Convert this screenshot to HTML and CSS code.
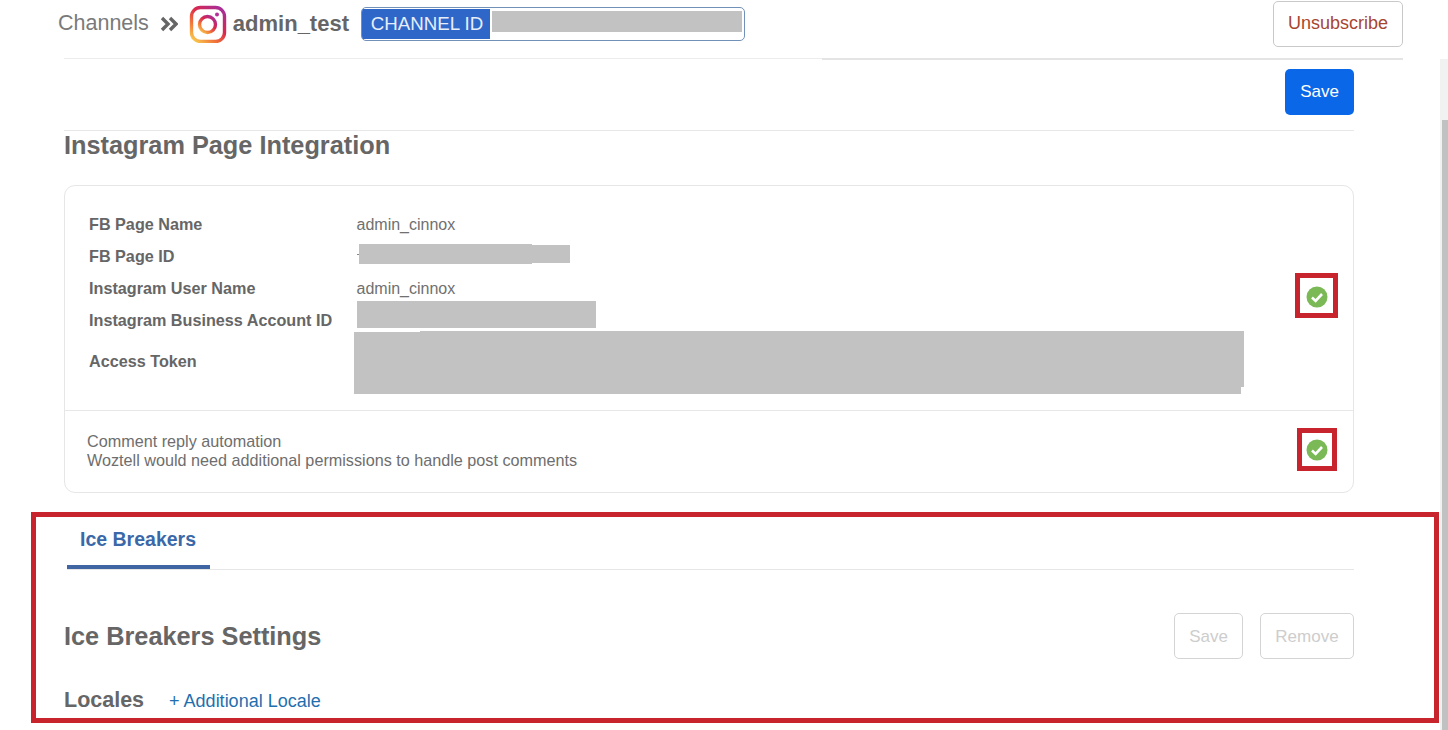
FILE: index.html
```html
<!DOCTYPE html>
<html lang="en">
<head>
<meta charset="utf-8">
<title>Instagram Page Integration</title>
<link rel="stylesheet" href="styles.css">
</head>
<body>
<header class="header">
  <span class="crumb">Channels</span>
  <svg class="chevrons" width="18" height="16" viewBox="0 0 18 16" fill="none" stroke="#666" stroke-width="3.4"><path d="M2 2l6 6-6 6M10 2l6 6-6 6"/></svg>
  <svg class="ig" width="38" height="38" viewBox="0 0 38 38" fill="none">
    <defs><linearGradient id="g" x1="0.1" y1="1" x2="0.9" y2="0"><stop offset="0" stop-color="#f9c74f"/><stop offset="0.3" stop-color="#f0743a"/><stop offset="0.6" stop-color="#d8274f"/><stop offset="1" stop-color="#a52f9c"/></linearGradient></defs>
    <rect x="2.5" y="2.5" width="33" height="34" rx="9" stroke="url(#g)" stroke-width="3.4"/>
    <circle cx="18.5" cy="19.5" r="8" stroke="url(#g)" stroke-width="3.4"/>
    <circle cx="28" cy="9.5" r="2" fill="#b5309a"/>
  </svg>
  <span class="channel-name">admin_test</span>
  <div class="channel-id">
    <span class="channel-tag">CHANNEL ID</span>
    <span class="redact redact-channel"></span>
  </div>
  <button class="btn btn-unsub">Unsubscribe</button>
</header>
<div class="header-rule"><span class="rule-light"></span><span class="rule-dark"></span></div>

<main class="main">
  <div class="save-row"><button class="btn btn-primary">Save</button></div>
  <h1 class="page-title">Instagram Page Integration</h1>
  <section class="card">
    <div class="card-top">
      <dl class="fields">
        <dt>FB Page Name</dt><dd>admin_cinnox</dd>
        <dt>FB Page ID</dt><dd class="redact-row redact-row-id"><span class="residue"></span><span class="redact redact-a"></span><span class="redact redact-b"></span></dd>
        <dt>Instagram User Name</dt><dd>admin_cinnox</dd>
        <dt>Instagram Business Account ID</dt><dd class="redact-row"><span class="redact redact-c"></span></dd>
        <dt class="token-label">Access Token</dt><dd class="token"><span class="redact token-top"></span><span class="redact token-mid"></span><span class="redact token-bot"></span></dd>
      </dl>
      <span class="check-box check-box-1"><svg class="check" width="22" height="22" viewBox="0 0 22 22"><circle cx="11" cy="11" r="10.5" fill="#7ab956"/><path d="M6 11.5l3.6 3.4L16 8" fill="none" stroke="#fff" stroke-width="2.6"/></svg></span>
    </div>
    <div class="card-bottom">
      <p class="comment">Comment reply automation<br>Woztell would need additional permissions to handle post comments</p>
      <span class="check-box check-box-2"><svg class="check" width="22" height="22" viewBox="0 0 22 22"><circle cx="11" cy="11" r="10.5" fill="#7ab956"/><path d="M6 11.5l3.6 3.4L16 8" fill="none" stroke="#fff" stroke-width="2.6"/></svg></span>
    </div>
  </section>
</main>

<section class="ice">
  <div class="tabs"><span class="tab">Ice Breakers</span></div>
  <div class="ice-head">
    <h2 class="ice-title">Ice Breakers Settings</h2>
    <div class="ice-actions">
      <button class="btn btn-disabled btn-save">Save</button>
      <button class="btn btn-disabled btn-remove">Remove</button>
    </div>
  </div>
  <div class="locales"><span class="locales-label">Locales</span><a class="locale-link">+ Additional Locale</a></div>
</section>

<div class="scrollbar"><span class="scroll-thumb"></span></div>
</body>
</html>
```
FILE: styles.css
```css
* { box-sizing: border-box; }
html, body { margin: 0; padding: 0; }
body {
  width: 1448px;
  height: 730px;
  overflow: hidden;
  position: relative;
  background: #fff;
  font-family: "Liberation Sans", Arial, sans-serif;
  color: #666;
}
button { font-family: inherit; cursor: pointer; background: #fff; }

.header {
  height: 58px;
  display: flex;
  align-items: center;
  padding: 0 45px 11px 58px;
}
.crumb { font-size: 21.5px; color: #7a7a7a; }
.chevrons { margin-left: 11px; }
.ig { margin-left: 11px; flex: none; }
.channel-name { margin-left: 6px; font-size: 22px; font-weight: 700; color: #666; }
.channel-id {
  margin-left: 12px;
  width: 384px;
  height: 34px;
  display: flex;
  align-items: flex-start;
  border: 1.5px solid #7291b8;
  border-radius: 5px;
  overflow: hidden;
  padding-top: 1px;
}
.channel-tag {
  width: 128px;
  height: 30px;
  line-height: 30px;
  padding-left: 2px;
  background: #2f67c9;
  color: #e6eefa;
  font-size: 18.7px;
  text-align: center;
  white-space: nowrap;
  flex: none;
}
.redact { display: block; background: #c2c2c2; flex: none; }
.redact-channel { width: 250px; height: 21px; margin: 2px 0 0 2px; }

.btn { border-radius: 5px; font-size: 17px; padding: 0; }
.btn-unsub {
  margin-left: auto;
  align-self: flex-start;
  margin-top: 1px;
  width: 130px;
  height: 46px;
  padding-bottom: 2px;
  border: 1px solid #c9c9c9;
  color: #a8452f;
  font-size: 18px;
}
.header-rule { display: flex; height: 2px; margin: 0 45px 0 64px; }
.rule-light { flex: 0 0 758px; height: 1px; background: #ececec; }
.rule-dark { flex: 1; background: #e4e4e4; }

.main { width: 1354px; padding-left: 64px; }
.save-row {
  display: flex;
  justify-content: flex-end;
  padding: 9px 0 15px;
  border-bottom: 1px solid #e8e8e8;
}
.btn-primary {
  width: 69px;
  height: 46px;
  background: #0a68e8;
  border: 0;
  color: #fff;
}
.page-title {
  margin: 0;
  height: 54px;
  line-height: 29px;
  font-size: 25.3px;
  font-weight: 700;
  color: #666;
}
.card {
  height: 308px;
  border: 1px solid #e6e6e6;
  border-radius: 11px;
}
.card-top {
  height: 225px;
  display: flex;
  padding: 22px 15px 0 24px;
  border-bottom: 1px solid #e8e8e8;
}
.fields {
  margin: 0;
  flex: 1;
  display: grid;
  grid-template-columns: 267.5px 1fr;
  grid-auto-rows: 32px;
  align-items: center;
}
.fields dt { font-size: 16.2px; font-weight: 700; color: #666; padding-top: 1px; }
.fields dd { margin: 0; padding-top: 2px; font-size: 16px; color: #707070; }
.fields .redact-row { display: flex; align-items: center; padding-top: 0; }
.fields .redact-row-id { margin-top: -4px; }
.residue { width: 2px; height: 1px; background: #888; flex: none; }
.redact-a { width: 173px; height: 20px; }
.redact-b { width: 38px; height: 18px; }
.redact-c { width: 239px; height: 27px; margin-top: -11px; }
.fields .token-label { align-self: start; padding-top: 16px; }
.fields .token { align-self: start; margin: -5px 0 0 -3px; padding-top: 0; }
.token-top { width: 824px; height: 1px; margin-left: 66px; }
.token-mid { width: 890px; height: 55px; }
.token-bot { width: 887px; height: 7px; }
.check-box {
  display: flex;
  align-items: center;
  justify-content: center;
  flex: none;
  border: 5px solid #c8242e;
}
.check-box-1 { width: 43px; height: 45px; margin-top: 65px; padding-top: 2px; }
.card-bottom {
  height: 81px;
  display: flex;
  padding: 21px 16px 0 22px;
}
.comment {
  margin: 0;
  flex: 1;
  font-size: 16.2px;
  line-height: 19px;
  color: #6e6e6e;
}
.check-box-2 { width: 40px; height: 43px; margin-top: -4px; }
.check { display: block; }

.ice {
  margin: 19px 0 0 31px;
  width: 1408px;
  height: 211px;
  border: 5px solid #c8242e;
  padding: 0 80px 0 28px;
}
.tabs {
  height: 53px;
  margin-left: 3px;
  border-bottom: 1px solid #e6e6e6;
  display: flex;
}
.tab {
  width: 143px;
  height: 52px;
  padding: 11px 0 0 13px;
  border-bottom: 4px solid #3f66a3;
  font-size: 19.5px;
  font-weight: 700;
  color: #3b68a8;
}
.ice-head {
  display: flex;
  justify-content: space-between;
  align-items: center;
  margin-top: 43px;
  height: 46px;
}
.ice-title { margin: 0; font-size: 25.3px; font-weight: 700; color: #666; }
.ice-actions { display: flex; gap: 17px; }
.btn-disabled { height: 46px; border: 1px solid #d4d4d4; color: #cdcdcd; padding-top: 1px; }
.btn-save { width: 69px; }
.btn-remove { width: 94px; }
.locales { display: flex; align-items: baseline; margin-top: 29px; }
.locales-label { font-size: 21.5px; font-weight: 700; color: #666; }
.locale-link { margin-left: 25px; font-size: 18px; color: #1f6fae; }

.scrollbar {
  position: absolute;
  right: 0;
  top: 59px;
  bottom: 0;
  width: 8px;
  background: #f1f1f1;
  padding-top: 61px;
}
.scroll-thumb { display: block; height: 100%; margin-left: 2px; background: #c1c1c1; }
```
